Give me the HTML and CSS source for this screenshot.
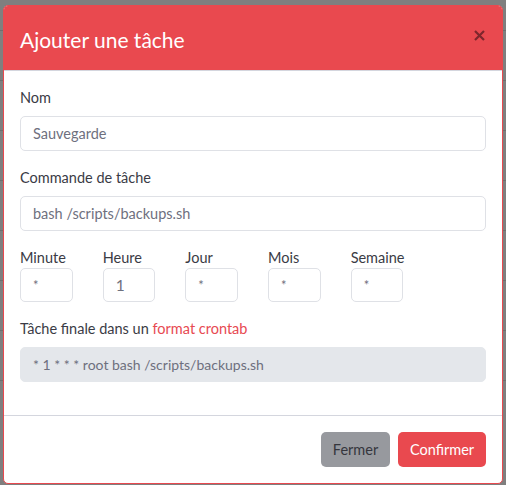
FILE: index.html
```html
<!DOCTYPE html>
<html lang="fr">
<head>
<meta charset="utf-8">
<title>Ajouter une tâche</title>
<link rel="stylesheet" href="styles.css">
</head>
<body>
<div class="backdrop">
  <div class="bg-row"></div><div class="bg-row"></div><div class="bg-row"></div><div class="bg-row"></div>
  <div class="bg-row"></div><div class="bg-row"></div><div class="bg-row"></div><div class="bg-row"></div>
</div>
<div class="modal">
  <div class="modal-header">
    <h5 class="modal-title">Ajouter une tâche</h5>
    <button class="close" type="button" aria-label="Fermer"><svg width="11" height="11" viewBox="0 0 11 11"><path d="M1 1L10 10M10 1L1 10" stroke="#7e262c" stroke-width="2.2" fill="none"/></svg></button>
  </div>
  <div class="modal-body">
    <div class="form-group">
      <label class="label">Nom</label>
      <div class="input">Sauvegarde</div>
    </div>
    <div class="form-group">
      <label class="label">Commande de tâche</label>
      <div class="input">bash /scripts/backups.sh</div>
    </div>
    <div class="cron-row">
      <div class="cron-col"><label class="label small-gap">Minute</label><div class="input cron">*</div></div>
      <div class="cron-col"><label class="label small-gap">Heure</label><div class="input cron num">1</div></div>
      <div class="cron-col"><label class="label small-gap">Jour</label><div class="input cron">*</div></div>
      <div class="cron-col"><label class="label small-gap">Mois</label><div class="input cron">*</div></div>
      <div class="cron-col"><label class="label small-gap">Semaine</label><div class="input cron">*</div></div>
    </div>
    <div class="form-group">
      <label class="label">Tâche finale dans un <a class="link">format crontab</a></label>
      <div class="input readonly">* 1 * * * root bash /scripts/backups.sh</div>
    </div>
  </div>
  <div class="modal-footer">
    <button class="btn btn-secondary" type="button">Fermer</button>
    <button class="btn btn-danger" type="button">Confirmer</button>
  </div>
</div>
</body>
</html>
```
FILE: styles.css
```css
* { box-sizing: border-box; }
html, body { margin: 0; padding: 0; }
body {
  width: 506px;
  height: 485px;
  overflow: hidden;
  background: #7f7f7f;
  font-family: Lato, "Open Sans", sans-serif;
  position: relative;
}
.backdrop {
  position: absolute;
  inset: 0;
  padding-top: 30px;
  overflow: hidden;
}
.bg-row {
  height: 50px;
  border-top: 1px solid #6e6e6e;
}
.modal {
  position: absolute;
  left: 3px;
  top: 5px;
  width: 500px;
  height: 479px;
  background: #fff;
  border: 1px solid #e9494f;
  border-radius: 5px;
  overflow: hidden;
  display: flex;
  flex-direction: column;
}
.modal-header {
  background: #e9494f;
  height: 65px;
  display: flex;
  align-items: center;
  justify-content: space-between;
  padding: 0 16px;
  border-bottom: 1px solid #d4d6de;
}
.modal-title {
  margin: 0;
  color: #fff;
  font-weight: 400;
  font-size: 21px;
  padding-top: 2px;
}
.close {
  background: none;
  border: 0;
  padding: 0;
  margin-top: -6px;
  margin-right: 1px;
  display: flex;
}
.modal-body {
  padding: 16px 16px 0;
}
.form-group { margin-bottom: 16px; }
.label {
  display: block;
  color: #3a3b45;
  font-size: 14.5px;
  line-height: 22px;
  margin-bottom: 7px;
}
.label.small-gap { margin-bottom: 0; line-height: 21px; }
.link { color: #e74a52; text-decoration: none; }
.input {
  height: 35px;
  border: 1px solid #dfe1e6;
  border-radius: 5px;
  padding: 0 12px;
  display: flex;
  align-items: center;
  color: #6e707e;
  font-size: 14.5px;
}
.input.readonly {
  background: #e4e7eb;
  border-color: #e4e7eb;
  font-size: 14px;
}
.cron-row {
  display: flex;
  margin: 0 -15px 16px;
}
.cron-col {
  width: 82.67px;
  padding: 0 15px;
}
.input.cron {
  height: 34px;
  font-size: 13px;
}
.input.cron.num { font-size: 15.5px; }
.modal-footer {
  margin-top: auto;
  border-top: 1px solid #d4d6de;
  padding: 16px 16px 0;
  height: 68px;
  display: flex;
  justify-content: flex-end;
  gap: 8px;
}
.btn {
  height: 35px;
  border: 0;
  border-radius: 5px;
  font-family: inherit;
  font-size: 14.5px;
  padding: 0;
}
.btn-secondary { background: #97999e; color: #35363d; width: 69px; }
.btn-danger { background: #e9494f; color: #fff; width: 88px; }
```
